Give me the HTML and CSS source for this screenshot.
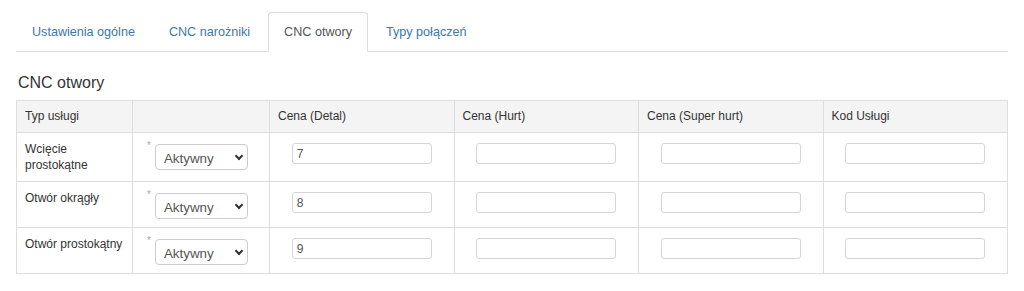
FILE: index.html
```html
<!DOCTYPE html>
<html>
<head>
  <meta charset="UTF-8">
  <meta name="viewport" content="width=device-width, initial-scale=1.0">
  <title>CNC otwory</title>
  <link rel="stylesheet" href="styles.css">
</head>
<body>
  <div class="page">
    <ul class="tabs">
      <li class="tab"><a href="#">Ustawienia ogólne</a></li>
      <li class="tab"><a href="#">CNC narożniki</a></li>
      <li class="tab active"><a href="#">CNC otwory</a></li>
      <li class="tab"><a href="#">Typy połączeń</a></li>
    </ul>

    <h4 class="section-title">CNC otwory</h4>

    <table class="price-table">
      <colgroup>
        <col class="col-type">
        <col class="col-status">
        <col class="col-price">
        <col class="col-price">
        <col class="col-price">
        <col class="col-price">
      </colgroup>
      <thead>
        <tr>
          <th>Typ usługi</th>
          <th></th>
          <th>Cena (Detal)</th>
          <th>Cena (Hurt)</th>
          <th>Cena (Super hurt)</th>
          <th>Kod Usługi</th>
        </tr>
      </thead>
      <tbody>
        <tr>
          <td>Wcięcie prostokątne</td>
          <td>
            <div class="status">
              <span class="required">*</span>
              <span class="select-wrap">
                <select><option>Aktywny</option><option>Nieaktywny</option></select>
              </span>
            </div>
          </td>
          <td><input type="text" value="7"></td>
          <td><input type="text"></td>
          <td><input type="text"></td>
          <td><input type="text"></td>
        </tr>
        <tr>
          <td>Otwór okrągły</td>
          <td>
            <div class="status">
              <span class="required">*</span>
              <span class="select-wrap">
                <select><option>Aktywny</option><option>Nieaktywny</option></select>
              </span>
            </div>
          </td>
          <td><input type="text" value="8"></td>
          <td><input type="text"></td>
          <td><input type="text"></td>
          <td><input type="text"></td>
        </tr>
        <tr>
          <td>Otwór prostokątny</td>
          <td>
            <div class="status">
              <span class="required">*</span>
              <span class="select-wrap">
                <select><option>Aktywny</option><option>Nieaktywny</option></select>
              </span>
            </div>
          </td>
          <td><input type="text" value="9"></td>
          <td><input type="text"></td>
          <td><input type="text"></td>
          <td><input type="text"></td>
        </tr>
      </tbody>
    </table>
  </div>
</body>
</html>
```

FILE: styles.css
```css
* {
  font-family: "Liberation Sans", Arial, Helvetica, sans-serif;
  box-sizing: border-box;
}

body {
  margin: 0;
  background-color: #fff;
  color: #333;
}

.page {
  padding: 12px 16px 0 16px;
}

/* tabs */
.tabs {
  display: flex;
  list-style: none;
  margin: 0;
  padding: 0;
  border-bottom: 1px solid #ddd;
}

.tab {
  margin-right: 2px;
  margin-bottom: -1px;
}

.tab a {
  display: block;
  padding: 10px 15px;
  font-size: 12.6px;
  line-height: 18px;
  color: #3a78ad;
  text-decoration: none;
  border: 1px solid transparent;
  border-radius: 4px 4px 0 0;
}

.tab.active a {
  color: #555;
  background-color: #fff;
  border-color: #ddd #ddd transparent #ddd;
}

.section-title {
  margin: 22px 0 8px 2px;
  font-size: 16px;
  font-weight: normal;
  line-height: 18px;
  color: #333;
}

/* table */
.price-table {
  width: 100%;
  border-collapse: collapse;
  border: 1px solid #ddd;
  font-size: 12px;
}

.col-type {
  width: 116px;
}

.col-status {
  width: 137px;
}

.price-table th,
.price-table td {
  border: 1px solid #ddd;
  padding: 8px;
  line-height: 16px;
  text-align: left;
  vertical-align: top;
  font-weight: normal;
  color: #333;
}

.price-table th {
  padding-top: 7px;
  background-color: #f4f4f4;
}

.status {
  display: flex;
  align-items: flex-start;
}

.required {
  margin: 0 4px 0 6px;
  font-size: 10px;
  line-height: 10px;
  color: #aaa;
}

.select-wrap {
  position: relative;
  margin-top: 3px;
}

.select-wrap::after {
  content: "";
  position: absolute;
  right: 6px;
  top: 9px;
  width: 4px;
  height: 4px;
  border-right: 2px solid #333;
  border-bottom: 2px solid #333;
  transform: rotate(45deg);
  pointer-events: none;
}

select {
  appearance: none;
  display: block;
  width: 93px;
  height: 26px;
  padding: 3px 8px 0 8px;
  font-size: 13.4px;
  color: #555;
  background-color: #fff;
  border: 1px solid #ccc;
  border-radius: 4px;
}

input[type="text"] {
  display: block;
  width: 140px;
  height: 21px;
  margin: 2px auto 0 auto;
  padding: 0 4px;
  font-size: 12px;
  color: #555;
  border: 1px solid #d6d6d6;
  border-radius: 3px;
}
```
